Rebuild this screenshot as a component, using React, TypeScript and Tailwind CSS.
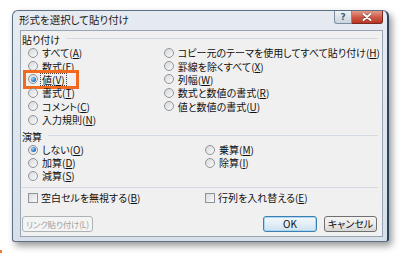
import React from 'react';

const font = "font-['Noto_Sans_CJK_JP','Noto_Sans',sans-serif] [font-feature-settings:'palt']";

const Key = ({ k }: { k: string }) => (
  <>
    (<span className="underline underline-offset-1">{k}</span>)
  </>
);

const Radio = ({ checked }: { checked?: boolean }) => (
  <span className="flex h-[10px] w-[10px] shrink-0 items-center justify-center rounded-full border border-[#8f9499] bg-linear-to-br from-[#d6d8da] to-[#fbfbfb]">
    {checked && (
      <span className="h-[5px] w-[5px] rounded-full bg-[radial-gradient(circle_at_35%_35%,#9fd8ff,#1a66b0_70%)]" />
    )}
  </span>
);

const Check = () => (
  <span className="h-[10px] w-[10px] shrink-0 border border-[#8f9499] bg-linear-to-br from-[#d9dbdd] to-[#fbfbfb]" />
);

const Option = ({
  label,
  k,
  checked,
  focus,
  h = 'h-[13.4px]',
}: {
  label: string;
  k: string;
  checked?: boolean;
  focus?: boolean;
  h?: string;
}) => (
  <div className={`relative flex items-center gap-[2px] ${h}`}>
    <Radio checked={checked} />
    <span
      className={`whitespace-nowrap leading-[11px] ${
        focus ? 'border border-dotted border-[#444] px-[1px]' : 'px-[2px]'
      }`}
    >
      {label}
      <Key k={k} />
    </span>
    {focus && (
      <span className="absolute -left-[5px] -top-[3px] h-[19px] w-[56px] border-[3px] border-[#f26a1f]" />
    )}
  </div>
);

const Legend = ({ label, mt }: { label: string; mt: string }) => (
  <div className={`flex h-[12px] items-center gap-[6px] pl-[1px] pr-[4px] ${mt}`}>
    <span className="leading-[11px]">{label}</span>
    <div className="mb-[2px] h-px flex-1 bg-[#d3dae1]" />
  </div>
);

export default function App() {
  return (
    <div className={`relative h-[255px] w-[400px] overflow-hidden bg-white pl-[12px] pt-[10px] text-[10px] text-[#111] ${font}`}>
      <div className="flex h-[232px] w-[377px] flex-col rounded-t-[6px] rounded-b-[3px] border border-[#5d6f83] border-r-[2px] border-r-[#2c435c] bg-linear-to-b from-[#e6ebf1] to-[#d7e0ea] shadow-[3px_4px_7px_rgba(0,0,0,0.4)]">
        {/* title bar */}
        <div className="flex h-[19px] items-start">
          <span className="ml-[6px] mt-[2px] text-[10.5px] leading-[14px] text-[#1b1b1b]">形式を選択して貼り付け</span>
          <div className="ml-auto mr-[4px] flex">
            <div className="flex h-[13px] w-[18px] items-center justify-center rounded-bl-[3px] border border-t-0 border-[#7d8ea2] bg-linear-to-b from-[#eef2f6] to-[#c9d4df] text-[9px] font-bold leading-none text-[#4c5e73] font-['DejaVu_Sans',sans-serif]">
              ?
            </div>
            <div className="flex h-[13px] w-[31px] items-center justify-center rounded-br-[3px] border border-l-0 border-t-0 border-[#7a2a22] bg-linear-to-b from-[#e39a8c] via-[#cf5a48] to-[#b8351f]">
              <svg width="10" height="8" viewBox="0 0 10 8">
                <path d="M1.5 1 L8.5 7 M8.5 1 L1.5 7" stroke="#3a1510" strokeWidth="3" strokeLinecap="round" opacity="0.5" />
                <path d="M1.5 1 L8.5 7 M8.5 1 L1.5 7" stroke="#fff" strokeWidth="2" strokeLinecap="round" />
              </svg>
            </div>
          </div>
        </div>

        {/* client area */}
        <div className="ml-[7px] flex h-[207px] w-[363px] flex-col border border-[#97a5b4] bg-[#f0f0f0]">
          <Legend label="貼り付け" mt="mt-[2px]" />
          <div className="mt-[1px] flex pl-[7px]">
            <div className="flex w-[177px] flex-col">
              <Option label="すべて" k="A" />
              <Option label="数式" k="F" />
              <Option label="値" k="V" checked focus />
              <Option label="書式" k="T" />
              <Option label="コメント" k="C" />
              <Option label="入力規則" k="N" />
            </div>
            <div className="flex flex-col">
              <Option label="コピー元のテーマを使用してすべて貼り付け" k="H" />
              <Option label="罫線を除くすべて" k="X" />
              <Option label="列幅" k="W" />
              <Option label="数式と数値の書式" k="R" />
              <Option label="値と数値の書式" k="U" />
            </div>
          </div>

          <Legend label="演算" mt="mt-[4px]" />
          <div className="mt-[1px] flex pl-[7px]">
            <div className="flex w-[177px] flex-col">
              <Option label="しない" k="O" checked h="h-[13px]" />
              <Option label="加算" k="D" h="h-[13px]" />
              <Option label="減算" k="S" h="h-[13px]" />
            </div>
            <div className="flex flex-col">
              <Option label="乗算" k="M" h="h-[13px]" />
              <Option label="除算" k="I" h="h-[13px]" />
            </div>
          </div>

          <div className="ml-[1px] mr-[4px] mt-[5px] h-px bg-[#d3dae1]" />

          <div className="mt-[3px] flex h-[13px] pl-[7px]">
            <div className="flex w-[177px] items-center gap-[3px]">
              <Check />
              <span className="whitespace-nowrap leading-[11px]">
                空白セルを無視する<Key k="B" />
              </span>
            </div>
            <div className="flex items-center gap-[3px]">
              <Check />
              <span className="whitespace-nowrap leading-[11px]">
                行列を入れ替える<Key k="E" />
              </span>
            </div>
          </div>

          <div className="mt-[12px] flex h-[16px] pl-[1px] pr-[5px]">
            <div className="flex w-[71px] items-center justify-center overflow-hidden whitespace-nowrap rounded-[3px] border border-[#adb2b5] bg-[#f4f4f4] text-[8.5px] leading-none tracking-[-0.2px] text-[#a0a0a0]">
              リンク貼り付け(L)
            </div>
            <div className="ml-auto flex w-[54px] items-center justify-center rounded-[3px] border border-[#3c7fb1] bg-linear-to-b from-[#f4f9fc] via-[#e3eef6] to-[#cde2f0] leading-none shadow-[inset_0_0_0_1px_#a9d6f2]">
              OK
            </div>
            <div className="ml-[7px] flex w-[53px] items-center justify-center whitespace-nowrap rounded-[3px] border border-[#707070] bg-linear-to-b from-[#f3f3f3] via-[#ebebeb] to-[#d6d6d6] leading-none">
              キャンセル
            </div>
          </div>
        </div>
      </div>
      <div className="absolute bottom-[2px] left-0 h-[3px] w-[2px] bg-[#f07a2a]" />
    </div>
  );
}
